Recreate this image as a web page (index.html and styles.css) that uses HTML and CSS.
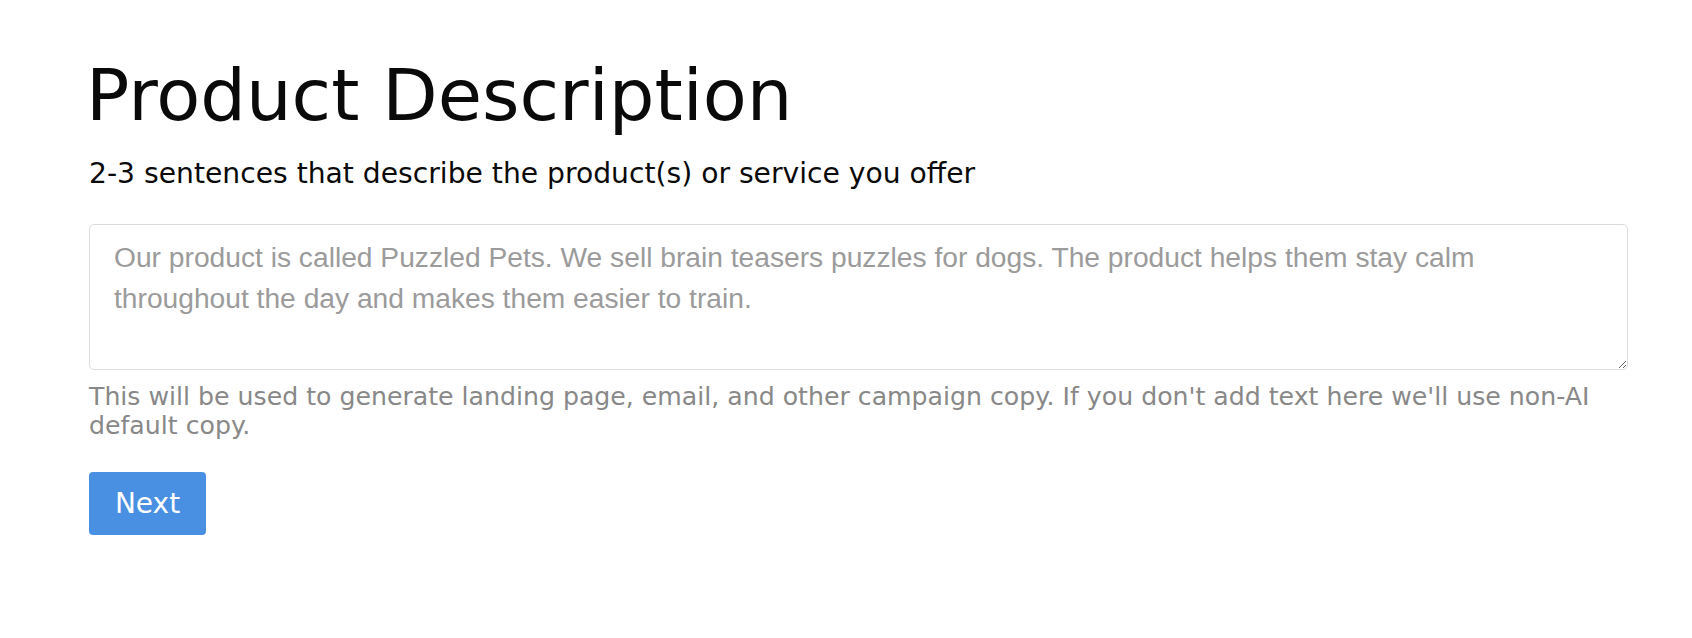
FILE: index.html
```html
<!DOCTYPE html>
<html lang="en">
<head>
<meta charset="utf-8">
<title>Product Description</title>
<link rel="stylesheet" href="styles.css">
</head>
<body>
<main class="form">
  <h1 class="title">Product Description</h1>
  <label class="label" for="desc">2-3 sentences that describe the product(s) or service you offer</label>
  <textarea id="desc" class="field" placeholder="Our product is called Puzzled Pets. We sell brain teasers puzzles for dogs. The product helps them stay calm throughout the day and makes them easier to train."></textarea>
  <p class="help">This will be used to generate landing page, email, and other campaign copy. If you don't add text here we'll use non-AI default copy.</p>
  <button class="btn" type="button">Next</button>
</main>
</body>
</html>
```
FILE: styles.css
```css
html, body {
  margin: 0;
  padding: 0;
  background: #ffffff;
}
body {
  font-family: "DejaVu Sans", Verdana, sans-serif;
  color: #000;
}
.form {
  width: 1539px;
  margin-left: 89px;
  padding-top: 53px;
  display: flex;
  flex-direction: column;
  align-items: flex-start;
}
.title {
  margin: 0 0 0 -3px;
  font-size: 72px;
  font-weight: 400;
  line-height: 84px;
  color: #0a0a0a;
}
.label {
  display: block;
  margin-top: 20px;
  font-size: 28.2px;
  line-height: 33px;
  color: #0a0a0a;
}
.field {
  display: block;
  box-sizing: border-box;
  width: 100%;
  height: 146px;
  margin-top: 34px;
  padding: 12px 24px;
  border: 1.5px solid #dcdcdc;
  border-radius: 5px;
  font-family: "Liberation Sans", Arial, sans-serif;
  font-size: 28.2px;
  line-height: 41px;
  color: #333;
  resize: vertical;
  outline: none;
}
.field::placeholder {
  color: #9b9b9b;
  opacity: 1;
}
.help {
  margin: 12px 0 0;
  font-size: 25.2px;
  line-height: 29.3px;
  color: #888888;
}
.btn {
  margin-top: 31px;
  height: 63px;
  width: 117px;
  padding: 0;
  border: none;
  border-radius: 4px;
  background: #4a90e2;
  color: #ffffff;
  font-family: "DejaVu Sans", Verdana, sans-serif;
  font-size: 28px;
  cursor: pointer;
}
```
